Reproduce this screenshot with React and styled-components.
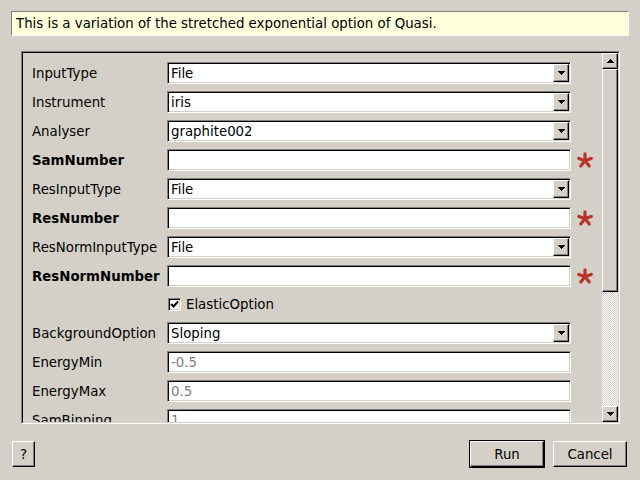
import React from "react";
import styled, { createGlobalStyle } from "styled-components";

const GlobalStyle = createGlobalStyle`
  html, body {
    margin: 0;
    padding: 0;
  }
  body {
    background: #d4d0c8;
    font-family: "DejaVu Sans", "Liberation Sans", sans-serif;
    font-size: 13.33px;
    color: #000;
  }
`;

const fields = [
  { label: "InputType", kind: "combo", value: "File" },
  { label: "Instrument", kind: "combo", value: "iris" },
  { label: "Analyser", kind: "combo", value: "graphite002" },
  { label: "SamNumber", kind: "text", value: "", bold: true, required: true },
  { label: "ResInputType", kind: "combo", value: "File" },
  { label: "ResNumber", kind: "text", value: "", bold: true, required: true },
  { label: "ResNormInputType", kind: "combo", value: "File" },
  { label: "ResNormNumber", kind: "text", value: "", bold: true, required: true },
  { label: "", kind: "check", value: "ElasticOption" },
  { label: "BackgroundOption", kind: "combo", value: "Sloping" },
  { label: "EnergyMin", kind: "text", value: "-0.5", muted: true },
  { label: "EnergyMax", kind: "text", value: "0.5", muted: true },
  { label: "SamBinning", kind: "text", value: "1", muted: true },
];

const Arrow = ({ up }) => (
  <svg width="7" height="4" viewBox="0 0 7 4" shapeRendering="crispEdges">
    {up ? (
      <g fill="#000">
        <rect x="3" y="0" width="1" height="1" />
        <rect x="2" y="1" width="3" height="1" />
        <rect x="1" y="2" width="5" height="1" />
        <rect x="0" y="3" width="7" height="1" />
      </g>
    ) : (
      <g fill="#000">
        <rect x="0" y="0" width="7" height="1" />
        <rect x="1" y="1" width="5" height="1" />
        <rect x="2" y="2" width="3" height="1" />
        <rect x="3" y="3" width="1" height="1" />
      </g>
    )}
  </svg>
);

const Asterisk = () => (
  <svg width="16" height="16" viewBox="0 0 16 16">
    <g stroke="#b8352a" strokeWidth="3.2" strokeLinecap="round">
      <line x1="8" y1="8.5" x2="8" y2="1.8" />
      <line x1="8" y1="8.5" x2="14.3" y2="6.4" />
      <line x1="8" y1="8.5" x2="1.7" y2="6.4" />
      <line x1="8" y1="8.5" x2="12.2" y2="14" />
      <line x1="8" y1="8.5" x2="3.8" y2="14" />
    </g>
  </svg>
);

export default function App() {
  return (
    <>
      <GlobalStyle />
      <Window>
        <Description>
          This is a variation of the stretched exponential option of Quasi.
        </Description>
        <Frame>
          <FrameInner>
            <Viewport>
              <Form>
                {fields.map((f, i) => (
                  <Row key={i} $short={f.kind === "check"}>
                    <Label $bold={f.bold}>{f.label}</Label>
                    {f.kind === "combo" && (
                      <Field>
                        <FieldText>{f.value}</FieldText>
                        <DropButton>
                          <Arrow />
                        </DropButton>
                      </Field>
                    )}
                    {f.kind === "text" && (
                      <Field>
                        <FieldText $muted={f.muted}>{f.value}</FieldText>
                      </Field>
                    )}
                    {f.kind === "check" && (
                      <CheckRow>
                        <CheckBox>
                          <svg width="9" height="9" viewBox="0 0 9 9">
                            <path
                              d="M1 4 L3.5 6.5 L8 1.5"
                              fill="none"
                              stroke="#000"
                              strokeWidth="2"
                            />
                          </svg>
                        </CheckBox>
                        {f.value}
                      </CheckRow>
                    )}
                    <Mark>{f.required && <Asterisk />}</Mark>
                  </Row>
                ))}
              </Form>
            </Viewport>
            <ScrollBar>
              <ScrollButton>
                <Arrow up />
              </ScrollButton>
              <Thumb />
              <Track />
              <ScrollButton>
                <Arrow />
              </ScrollButton>
            </ScrollBar>
          </FrameInner>
        </Frame>
        <ButtonRow>
          <HelpButton>?</HelpButton>
          <Spacer />
          <DefaultFrame>
            <PushButton $w={74}>Run</PushButton>
          </DefaultFrame>
          <PushButton $w={74}>Cancel</PushButton>
        </ButtonRow>
      </Window>
    </>
  );
}

const Window = styled.div`
  width: 640px;
  height: 480px;
  box-sizing: border-box;
  padding: 11px 11px 0 11px;
  display: flex;
  flex-direction: column;
`;

const Description = styled.div`
  height: 25px;
  box-sizing: border-box;
  border: 1px solid;
  border-color: #808080 #ffffff #ffffff #808080;
  background: #ffffdc;
  padding-left: 4px;
  display: flex;
  align-items: center;
  white-space: nowrap;
`;

const Frame = styled.div`
  margin: 15px 9px 0 10px;
  height: 373px;
  box-sizing: border-box;
  border: 1px solid;
  border-color: #808080 #ffffff #ffffff #808080;
`;

const FrameInner = styled.div`
  height: 100%;
  box-sizing: border-box;
  border: 1px solid;
  border-color: #000000 #d4d0c8 #d4d0c8 #000000;
  display: flex;
`;

const Viewport = styled.div`
  flex: 1;
  overflow: hidden;
  padding: 9px 0 0 9px;
`;

const Form = styled.div`
  display: flex;
  flex-direction: column;
  gap: 7px;
`;

const Row = styled.div`
  display: grid;
  grid-template-columns: 135px 404px 31px;
  align-items: center;
  height: ${(p) => (p.$short ? 21 : 22)}px;
  flex-shrink: 0;
`;

const Label = styled.div`
  font-weight: ${(p) => (p.$bold ? "bold" : "normal")};
  white-space: nowrap;
`;

const Field = styled.div`
  height: 22px;
  box-sizing: border-box;
  border: 1px solid;
  border-color: #808080 #ffffff #ffffff #808080;
  box-shadow: inset 1px 1px #000000, inset -1px -1px #d4d0c8;
  background: #ffffff;
  padding: 1px;
  display: flex;
  align-items: center;
`;

const FieldText = styled.span`
  flex: 1;
  padding-left: 2px;
  color: ${(p) => (p.$muted ? "#808080" : "#000000")};
  white-space: nowrap;
`;

const raised = `
  background: #d4d0c8;
  box-sizing: border-box;
  border: 1px solid;
  border-color: #ffffff #000000 #000000 #ffffff;
  box-shadow: inset -1px -1px #808080;
  display: flex;
  align-items: center;
  justify-content: center;
`;

const DropButton = styled.div`
  ${raised}
  width: 16px;
  height: 18px;
`;

const CheckRow = styled.div`
  display: flex;
  align-items: center;
  gap: 5px;
  white-space: nowrap;
`;

const CheckBox = styled.div`
  width: 13px;
  height: 13px;
  box-sizing: border-box;
  border: 1px solid;
  border-color: #808080 #ffffff #ffffff #808080;
  box-shadow: inset 1px 1px #000000, inset -1px -1px #d4d0c8;
  background: #ffffff;
  display: flex;
  align-items: center;
  justify-content: center;
  margin-left: 1px;
`;

const Mark = styled.div`
  padding-left: 6px;
  display: flex;
  align-items: center;
`;

const ScrollBar = styled.div`
  width: 16px;
  display: flex;
  flex-direction: column;
`;

const ScrollButton = styled.div`
  ${raised}
  width: 16px;
  height: 16px;
`;

const Thumb = styled.div`
  ${raised}
  height: 223px;
`;

const Track = styled.div`
  flex: 1;
  background: repeating-conic-gradient(#ffffff 0 25%, #d4d0c8 0 50%) 0 0 / 2px 2px;
`;

const ButtonRow = styled.div`
  margin-top: 16px;
  height: 28px;
  display: flex;
  align-items: center;
  padding: 0 2px 0 1px;
`;

const Spacer = styled.div`
  flex: 1;
`;

const HelpButton = styled.div`
  ${raised}
  width: 23px;
  height: 26px;
`;

const DefaultFrame = styled.div`
  border: 1px solid #000000;
  margin-right: 8px;
  display: flex;
`;

const PushButton = styled.div`
  ${raised}
  width: ${(p) => p.$w}px;
  height: 26px;
`;
